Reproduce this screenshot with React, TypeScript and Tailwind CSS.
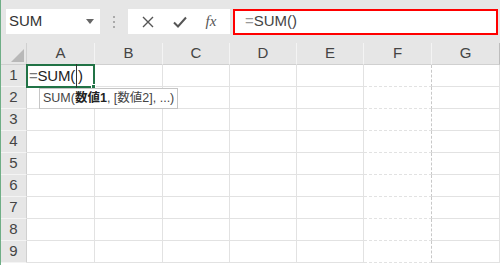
import React from 'react';

const font = { fontFamily: '"Liberation Sans", "Noto Sans CJK JP", sans-serif' };

const cols = ['A', 'B', 'C', 'D', 'E', 'F', 'G'];
const rows = [1, 2, 3, 4, 5, 6, 7, 8, 9];

function Toolbar() {
  return (
    <div className="flex h-[43px] items-center bg-[#e6e6e6] pl-[5px]">
      <div className="flex h-[25px] w-[94px] items-center justify-between bg-white pl-[3px] pr-[6px] text-[15px] text-[#333]">
        <span>SUM</span>
        <svg width="8" height="5" viewBox="0 0 8 5">
          <path d="M0 0h8L4 5z" fill="#666" />
        </svg>
      </div>
      <div className="flex w-[28px] flex-col items-center gap-[3px]">
        <span className="h-[2px] w-[2px] bg-[#aaa]" />
        <span className="h-[2px] w-[2px] bg-[#aaa]" />
        <span className="h-[2px] w-[2px] bg-[#aaa]" />
      </div>
      <div className="flex h-[25px] w-[102px] items-center justify-around bg-white px-[4px]">
        <svg width="12" height="12" viewBox="0 0 12 12">
          <path d="M1 1l10 10M11 1L1 11" stroke="#555" strokeWidth="1.4" />
        </svg>
        <svg width="14" height="12" viewBox="0 0 14 12">
          <path d="M1 6.5l4 4L13 1.5" stroke="#555" strokeWidth="2" fill="none" />
        </svg>
        <span className="italic text-[15px] text-[#555]" style={{ fontFamily: '"Liberation Serif", serif' }}>
          fx
        </span>
      </div>
      <div className="ml-[3px] flex h-[26px] w-[265px] items-center border-2 border-[#ff0000] bg-white pl-[10px] text-[15px] text-[#444]">
        <span className="text-[#999]">=</span>SUM()
      </div>
    </div>
  );
}

export default function App() {
  return (
    <div className="h-[265px] w-[500px] overflow-hidden border-l border-[#6fae86] bg-white" style={font}>
      <Toolbar />
      <div className="grid grid-cols-[26px_68px_68px_67px_67px_67px_68px_68px] grid-rows-[22px_22px_22px_22px_22px_22px_22px_22px_22px_22px]">
        <div className="relative border-r border-b border-[#d0d0d0] bg-[#e6e6e6]">
          <svg className="absolute right-[2px] bottom-[2px]" width="13" height="13" viewBox="0 0 13 13">
            <path d="M13 0v13H0z" fill="#b8b8b8" />
          </svg>
        </div>
        {cols.map(c => (
          <div
            key={c}
            className={`flex items-center justify-center border-b border-[#d0d0d0] bg-[#e6e6e6] text-[15px] text-[#444] ${
              c === 'G' ? 'border-r border-r-[#bdbdbd]' : 'border-r border-r-[#f4f4f4]'
            }`}
          >
            {c}
          </div>
        ))}
        {rows.map(r => (
          <React.Fragment key={r}>
            <div className="flex items-center justify-center border-r border-b border-[#d0d0d0] border-b-[#f4f4f4] bg-[#e6e6e6] text-[15px] text-[#444]">
              {r}
            </div>
            {cols.map(c => (
              <div
                key={c}
                className={`relative border-b border-[#e2e2e2] ${
                  c === 'F' ? 'border-r border-dashed border-r-[#c8c8c8]' : 'border-r border-r-[#e2e2e2]'
                } ${c === 'G' ? 'border-r-[#d4d4d4]' : ''}`}
              >
                {r === 1 && c === 'A' && (
                  <>
                    <div className="absolute -top-[1px] -left-[1px] z-10 flex h-[24px] w-[69px] items-center border-2 border-[#217346] pl-[1px] text-[15px] tracking-[-0.2px] text-[#222]">
                      <span className="text-[#777]">=</span>SUM(
                      <span className="mx-[1px] h-[24px] w-px bg-[#333]" />)
                      <span className="absolute right-[-3px] bottom-[-3px] h-[5px] w-[5px] border border-white bg-[#217346]" />
                    </div>
                    <div className="absolute top-[23px] left-[12px] z-20 flex h-[21px] items-center whitespace-nowrap border border-[#c6c6c6] bg-white px-[3px] text-[12.5px] text-[#444]">
                      SUM(<b className="font-bold text-[#222]">数値1</b>, [数値2], ...)
                    </div>
                  </>
                )}
              </div>
            ))}
          </React.Fragment>
        ))}
      </div>
    </div>
  );
}
